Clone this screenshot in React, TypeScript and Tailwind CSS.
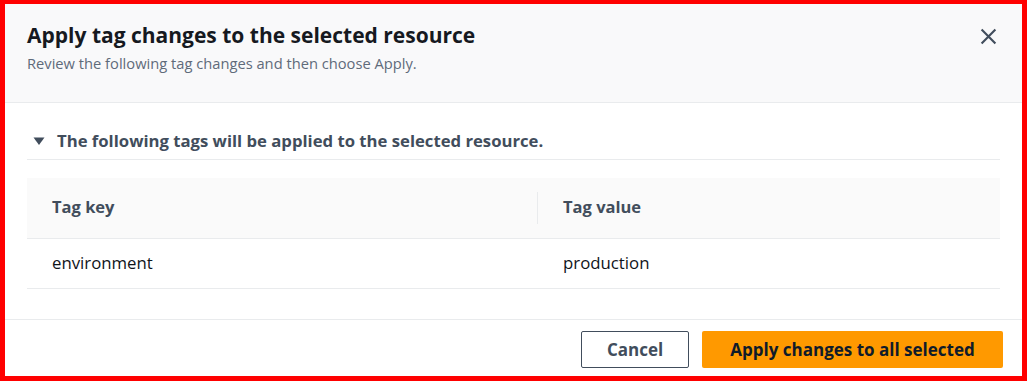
import React from 'react'

const rows = [{ key: 'environment', value: 'production' }]

const App = () => {
  return (
    <div
      className="w-[1027px] h-[381px] border-[5px] border-t-4 border-[#ff0000] bg-white flex flex-col text-[#0f141a]"
      style={{ fontFamily: '"Open Sans", Roboto, Arial, sans-serif' }}
    >
      {/* header */}
      <div className="h-[99px] bg-[#f9f9fa] border-b border-[#e9ebed] flex justify-between pl-[22px] pr-[22px] pt-[19px]">
        <div>
          <h1 className="text-[21px] leading-[24px] font-bold text-[#16191f]">
            Apply tag changes to the selected resource
          </h1>
          <p className="text-[14.7px] leading-[20px] text-[#5f6b7a] mt-[6px]">
            Review the following tag changes and then choose Apply.
          </p>
        </div>
        <button className="w-[24px] h-[24px] mt-[1px] flex items-center justify-center text-[#414d5c]">
          <svg width="17" height="17" viewBox="0 0 16 16" fill="none" stroke="currentColor" strokeWidth="2">
            <path d="M1.5 1.5l13 13M14.5 1.5l-13 13" />
          </svg>
        </button>
      </div>

      {/* body */}
      <div className="flex-1 px-[22px] pt-[24px]">
        <div className="flex items-center gap-[12px] pl-[6px] h-[28px] text-[#414d5c]">
          <svg width="12" height="12" viewBox="0 0 12 12" fill="currentColor">
            <path d="M0.5 2.5h11L6 10z" />
          </svg>
          <span className="text-[16.7px] font-bold">The following tags will be applied to the selected resource.</span>
        </div>
        <div className="border-b border-[#e9ebed] mt-[4px]" />

        <table className="w-full mt-[18px] border-collapse text-[16.8px]">
          <thead>
            <tr className="bg-[#fafafa] h-[60px] border-b border-[#e9ebed] text-[16.5px]">
              <th className="w-[511px] text-left font-bold text-[#414d5c] pl-[25px]">
                <div className="h-[32px] flex items-center border-r border-[#e9ebed]">Tag key</div>
              </th>
              <th className="text-left font-bold text-[#414d5c] pl-[25px]">Tag value</th>
            </tr>
          </thead>
          <tbody>
            {rows.map(row => (
              <tr key={row.key} className="h-[50px] border-b border-[#e9ebed]">
                <td className="pl-[25px]">{row.key}</td>
                <td className="pl-[25px]">{row.value}</td>
              </tr>
            ))}
          </tbody>
        </table>
      </div>

      {/* footer */}
      <div className="h-[57px] border-t border-[#e9ebed] flex justify-end items-start gap-[13px] pr-[19px] pt-[11px]">
        <button className="h-[37px] w-[108px] rounded-[2px] border border-[#414d5c] text-[17px] font-bold text-[#414d5c] bg-white">
          Cancel
        </button>
        <button className="h-[37px] w-[301px] rounded-[2px] bg-[#ff9900] text-[17px] font-bold text-[#0f1b2a]">
          Apply changes to all selected
        </button>
      </div>
    </div>
  )
}

export default App
